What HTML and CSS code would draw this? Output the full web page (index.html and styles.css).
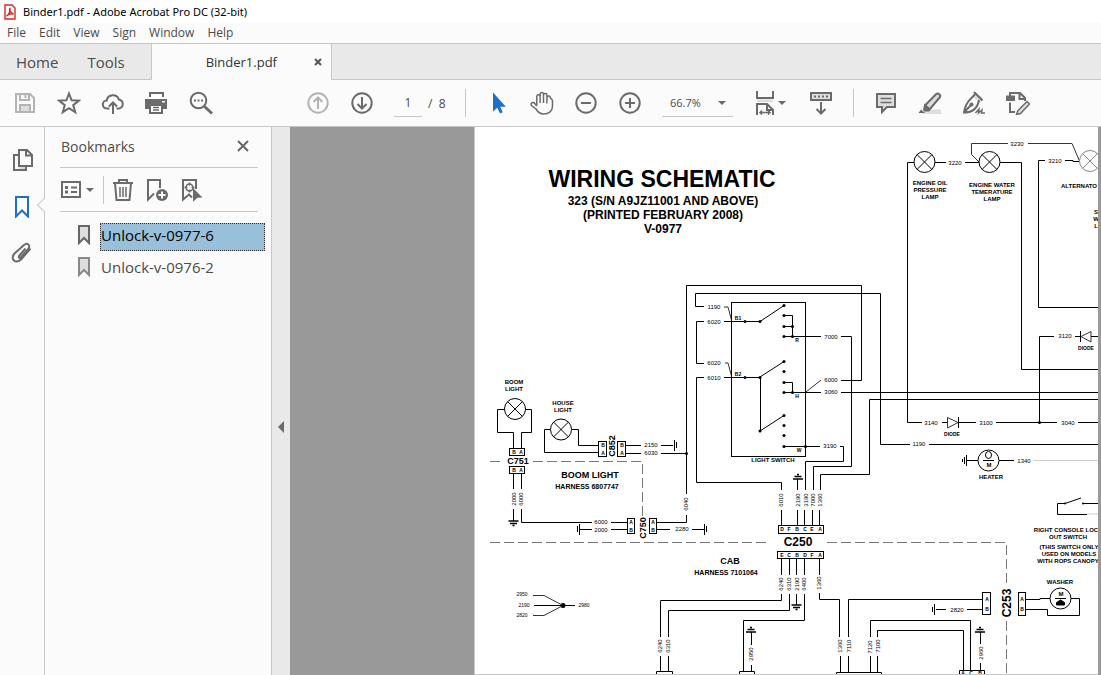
FILE: index.html
```html
<!DOCTYPE html>
<html lang="en">
<head>
  <meta charset="UTF-8">
  <meta name="viewport" content="width=device-width, initial-scale=1.0">
  <title>Binder1.pdf - Adobe Acrobat Pro DC (32-bit)</title>
  <link rel="stylesheet" href="styles.css">
</head>
<body>
<div class="app">

  <!-- Title bar -->
  <header class="titlebar">
    <svg class="app-icon" viewBox="0 0 12 16">
      <path d="M1 1h7l3 3v11H1z" fill="#fff" stroke="#e1251b" stroke-width="1.4"/>
      <path d="M2.500 12c2-1 4-4.500 3.500-7.500c-1.200.5 0 4 3.500 5.500c-2.500-.6-5 .2-7 2z" fill="none" stroke="#e1251b" stroke-width="1.400"/>
    </svg>
    <span>Binder1.pdf - Adobe Acrobat Pro DC (32-bit)</span>
  </header>

  <!-- Menu -->
  <nav class="menubar">
    <button>File</button>
    <button>Edit</button>
    <button>View</button>
    <button>Sign</button>
    <button>Window</button>
    <button>Help</button>
  </nav>

  <!-- Tabs -->
  <div class="tabs">
    <div class="tabs-main">
      <button>Home</button>
      <button>Tools</button>
    </div>
    <div class="tab-doc">
      <button class="tab-name">Binder1.pdf</button>
      <button class="tab-close" aria-label="Close tab">
        <svg viewBox="0 0 8 8"><path d="M1 1l6 6M7 1l-6 6" stroke="#555" stroke-width="2"/></svg>
      </button>
    </div>
    <div class="tabs-rest"></div>
  </div>

  <!-- Toolbar -->
  <div class="toolbar">
    <div class="group group-file">
      <button class="tool light" aria-label="Save">
        <svg class="icon" viewBox="0 0 24 24"><path d="M3 3h14l4 4v14H3zM7 3v6h9V3M7 21v-7h10v7"/><path d="M12.500 4v3" /><path d="M8 15h8v5H8z" class="tint"/></svg>
      </button>
      <button class="tool" aria-label="Star">
        <svg class="icon" viewBox="0 0 24 24"><path d="M12 2.500l2.600 6.800 7.300.3-5.700 4.500 2 7-6.200-4-6.200 4 2-7L2.100 9.600l7.300-.3z"/></svg>
      </button>
      <button class="tool" aria-label="Share">
        <svg class="icon" viewBox="0 0 24 24"><path d="M8.500 17.500H6a4 4 0 0 1-.3-8 6.300 6.300 0 0 1 12.200-1 4.600 4.600 0 0 1 .3 9h-2.700M12 23V12M8 15.500l4-4 4 4"/></svg>
      </button>
      <button class="tool" aria-label="Print">
        <svg class="icon" viewBox="0 0 24 24"><path class="solid" d="M4 1h15v5H4zM0 8h22v10h-4v-3H4v3H0z"/><path class="paper" d="M6 3h11v5H6zM17 10h3v1.500h-3z"/><path d="M5 14h12v8H5z" fill="#fff"/><path class="thin" d="M8 16.500h6M8 19h6"/></svg>
      </button>
      <button class="tool" aria-label="Find">
        <svg class="icon" viewBox="0 0 24 24"><circle cx="9.500" cy="9.500" r="7.800"/><path class="thick" d="M15.500 15.500l7.500 7"/><path class="solid" d="M5 8.500h2v2H5zM8.500 8.500h2v2h-2zM12 8.500h2v2h-2z"/></svg>
      </button>
    </div>

    <div class="group group-page">
      <button class="tool light" aria-label="Previous page">
        <svg class="icon" viewBox="0 0 24 24"><circle cx="12" cy="12" r="9.700"/><path d="M12 18V7M7.500 11l4.500-4.500 4.500 4.500"/></svg>
      </button>
      <button class="tool" aria-label="Next page">
        <svg class="icon" viewBox="0 0 24 24"><circle cx="12" cy="12" r="9.700"/><path d="M12 6v11M7.500 13l4.500 4.500 4.500-4.500"/></svg>
      </button>
      <input class="page-input" type="text" value="1" aria-label="Page number">
      <span class="page-total">/&nbsp; 8</span>
    </div>

    <div class="divider"></div>

    <div class="group">
      <button class="tool" aria-label="Select">
        <svg class="icon" viewBox="0 0 24 24"><path d="M7 1.500v19l4.300-3.800 2.700 5.800 2.700-1.200-2.500-5.600h5.600z" fill="#1f6fc9" stroke="none"/></svg>
      </button>
      <button class="tool" aria-label="Hand">
        <svg class="icon hand" viewBox="0 0 24 24"><path d="M6.800 14.500V5.300c0-2.200 3.300-2.200 3.300 0V12M10.100 12V3.300c0-2.400 3.400-2.400 3.400 0V12M13.500 4.300c0-2.300 3.400-2.300 3.400 0V12.500M16.900 6.800c0-2.300 3.400-2.300 3.400 0 .5 1 1.700 1 2.200 3V15c0 5-3.500 8-9 8-4.500 0-6-2.500-7.500-5L1.500 14.500c-1.500-2.600 1.800-4 3.300-2l2 2.500"/></svg>
      </button>
      <button class="tool" aria-label="Zoom out">
        <svg class="icon" viewBox="0 0 24 24"><circle cx="12" cy="12" r="9.700"/><path d="M7 12h10"/></svg>
      </button>
      <button class="tool" aria-label="Zoom in">
        <svg class="icon" viewBox="0 0 24 24"><circle cx="12" cy="12" r="9.700"/><path d="M7 12h10M12 7v10"/></svg>
      </button>
    </div>

    <div class="zoom">
      <select aria-label="Zoom level">
        <option>66.7%</option>
        <option>100%</option>
        <option>150%</option>
      </select>
      <span class="caret"></span>
    </div>

    <div class="group">
      <button class="tool tool-fit" aria-label="Fit width">
        <svg class="icon" viewBox="0 0 24 24"><path d="M4 0v7h16V0M4 24V13h10l6 6v5M14 13v6h6"/><path class="thin" d="M7 21.500h10M9 19.500l-2 2 2 2M15 19.500l2 2-2 2"/><path class="tint" d="M4 8.500h16V11H4z"/></svg>
        <span class="caret"></span>
      </button>
      <button class="tool" aria-label="Show toolbar">
        <svg class="icon" viewBox="0 0 24 24"><path class="filled" d="M2 2h20v7H2z"/><path class="dots" d="M5 5.500h15"/><path d="M12 11v11M7.500 18l4.500 4.500 4.500-4.500"/></svg>
      </button>
    </div>

    <div class="divider"></div>

    <div class="group">
      <button class="tool" aria-label="Comment">
        <svg class="icon" viewBox="0 0 24 24"><path class="filled" d="M3 3h18v13h-8l-5 5v-5H3z"/><path class="thin" d="M6.500 7.500h11M6.500 11.500h11"/></svg>
      </button>
      <button class="tool" aria-label="Highlight">
        <svg class="icon" viewBox="0 0 24 24"><path class="tint" d="M8 18.500h15V23H4z"/><path class="filled" d="M7 14.500L18 3.200c2-2 5.500 1 3.600 3.300L11.500 18.500H8z"/><path class="solid" d="M6.500 12.500l6.500 5.500-2 2.500H6l-1-2zM3 18.500l4 3.500H.5z"/></svg>
      </button>
      <button class="tool" aria-label="Sign">
        <svg class="icon" viewBox="0 0 24 24"><path class="tint" d="M14 2l7 5-3 5-7-6z"/><path d="M12 1l8.500 8.500M13 3C10.500 7.500 3.500 9 2 21.500 10 21.500 15.500 18 17 9M2 21.500l6.500-7"/><circle class="solid" cx="9.500" cy="13.500" r="2"/><path class="thin" d="M13.500 22l3.500-4-.5 4 3.500-3-.5 3h3.500"/></svg>
      </button>
      <button class="tool" aria-label="Edit">
        <svg class="icon" viewBox="0 0 24 24"><path d="M4 11.500V21h5M4 5V2h10l5 5v3M13.500 2v6H19"/><rect class="solid" x="0" y="4.500" width="9" height="5.500"/><path class="filled thin" d="M12 19.500l9-9 2.500 2.500-9 9.500-4 1z"/></svg>
      </button>
    </div>
  </div>

  <div class="workspace">
    <!-- Side rail -->
    <nav class="rail">
      <button class="rail-item" aria-label="Pages">
        <svg class="icon" viewBox="0 0 24 24"><path class="tint" d="M9 18h7v3H9z"/><path d="M9 2h8l5 5v11H9zM16 2v5.500h6M9 7H4v15h12v-3"/></svg>
      </button>
      <button class="rail-item active" aria-label="Bookmarks">
        <svg class="icon" viewBox="0 0 24 24"><path d="M6 3h12v19.500l-6-6-6 6z"/></svg>
        <span class="notch"></span>
      </button>
      <button class="rail-item" aria-label="Attachments">
        <svg class="icon" viewBox="0 0 24 24"><path d="M15.500 8.500l-6 7c-1.500 1.800-.2 3.200 1.500 1.700l7-8c3-3.500-.5-7.200-4-4.200L4.500 13.500c-5 5.500 1.500 11 6.500 6l9.500-11"/></svg>
      </button>
    </nav>

    <!-- Bookmarks panel -->
    <aside class="panel">
      <div class="panel-head">
        <h2>Bookmarks</h2>
        <button class="panel-close" aria-label="Close panel">
          <svg viewBox="0 0 12 12"><path d="M1 1l10 10M11 1L1 11" stroke="#666" stroke-width="2"/></svg>
        </button>
      </div>
      <div class="panel-tools">
        <button class="options" aria-label="Options">
          <svg class="icon" viewBox="0 0 24 24"><rect x="2" y="4" width="18" height="15"/><path d="M11 9.500h6M11 14h6"/><path class="solid" d="M5 8h3v3H5zM5 12.500h3v3H5z"/></svg>
          <span class="caret"></span>
        </button>
        <div class="divider small"></div>
        <button aria-label="Delete">
          <svg class="icon" viewBox="0 0 24 24"><path d="M2 5h20M8 5V2h8v3M4 5l1.500 17h13L20 5"/><path class="thin" d="M9 9v10M12 9v10M15 9v10"/></svg>
        </button>
        <button aria-label="New bookmark">
          <svg class="icon" viewBox="0 0 24 24"><path d="M15 10V2H3v19.500l6-6"/><circle class="solid" cx="17" cy="17" r="6"/><path d="M13.500 17h7M17 13.500v7" stroke="#fff"/></svg>
        </button>
        <button aria-label="Find bookmark">
          <svg class="icon" viewBox="0 0 24 24"><path d="M17 11V2H4v19.500l6-5 3 3"/><circle class="thin" cx="10.500" cy="9.500" r="3.500"/><path class="thin" d="M10.500 4.500v3M10.500 11.500v3M5.500 9.500h3M12.500 9.500h3"/><path class="solid" d="M14 10l9.500 9.500-5 .3-4.500 4z"/></svg>
        </button>
      </div>
      <ul class="bookmarks">
        <li class="selected">
          <svg viewBox="0 0 14 20"><path d="M2 1h10v17l-5-5-5 5z"/></svg>
          <a href="#page1">Unlock-v-0977-6</a>
        </li>
        <li>
          <svg viewBox="0 0 14 20"><path d="M2 1h10v17l-5-5-5 5z"/></svg>
          <a href="#page2">Unlock-v-0976-2</a>
        </li>
      </ul>
    </aside>

    <button class="splitter" aria-label="Collapse panel"><span></span></button>

    <!-- Document -->
    <main class="viewer">
      <div class="page" id="page1">
        <svg class="schematic" viewBox="475 127 624 547">
          <defs>
            <g id="lamp">
              <circle r="10.500"/>
              <path d="M-7.400-7.400L7.400 7.400M7.400-7.400L-7.400 7.400"/>
            </g>
            <g id="ground">
              <path d="M-5 0H5M-3.500 2.500H3.500M-1 4.500H1" stroke-width="1.500"/>
            </g>
          </defs>

          <!-- Heading -->
          <text class="title" x="662" y="187">WIRING SCHEMATIC</text>
          <g class="subtitle">
            <text x="663" y="205">323 (S/N A9JZ11001 AND ABOVE)</text>
            <text x="663" y="219">(PRINTED FEBRUARY 2008)</text>
            <text x="663" y="233">V-0977</text>
          </g>

          <!-- Harness borders -->
          <g class="dashed">
            <path d="M490 461.500H503M533 461.500H642.500V516"/>
            <path d="M490 542.500H768M827 542.500H1006.500V583M1006.500 621V674"/>
          </g>

          <!-- Wires: lamps and alternator -->
          <g class="wire">
            <path d="M914 162.500H907.500V422.500H922M942 422.500H947M958 422.500H976M996 422.500H1057M1078 422.500H1099"/>
            <path d="M935 162.500H946M965 162.500H979M1000 162.500H1021.500V369.500H1099"/>
            <path d="M979 162L971.500 154.500V143.500H1008M1028 143.500H1072L1079.500 161" class="fine"/>
            <path d="M1079 161.500H1073V160.500H1065M1045 160.500H1038.500V307.500H1099"/>
            <path d="M1039.500 422V336.500H1054M1075 336.500H1081M1091 336.500H1099M1080.500 331V342M958.500 417V428"/>
            <path d="M947.500 417.500L958 422.500L947.500 428ZM1091 331.500L1081 336.500L1091 342Z" class="fine"/>
            <path d="M999 460.500H1014M967 460.500H978M966.500 455V466M964.500 457V464M962.500 459V462"/>
            <path d="M1034 460.500H1099" stroke="#ccc"/>
          </g>

          <!-- Wires: light switch -->
          <g class="wire">
            <path d="M686.500 494V285.500H861.500V380.500H841M686.500 515V522.500H657"/>
            <path d="M704 306.500H695.500V293.500H880.500V444.500H910M929 444.500H1099"/>
            <path d="M704 321.500H696.500V363.500H704M704 377.500H696.500V482.500H781.500V490"/>
            <path d="M724 307H728L731.500 320M725 363H728L731.500 376M806 392L821 380" class="fine"/>
            <rect x="731.500" y="302.500" width="74" height="154"/>
            <path d="M724 321.500H760M724 377.500H760.500V431M784 315.500H792.500V336.500M784 326.500H792.500M784 336.500H821M784 382.500H792.500V392.500M784 392.500H821M784 446.500H820"/>
            <path d="M760 321.500L784 305.500M760 377L784 361.500M760 431L784 415.500"/>
            <path d="M841 336.500H851.500V466.500H813.500V490M841 392.500H1099M1099 399.500H869.500V474.500H820.500V490"/>
            <path d="M840 446.500H843.500V461.500H805.500V490M797.500 479V490"/>
          </g>
          <g class="dot">
            <circle cx="745" cy="321.500" r="1.500"/><circle cx="760" cy="321.500" r="1.500"/>
            <circle cx="784" cy="305.500" r="1.500"/><circle cx="784" cy="315.500" r="1.500"/>
            <circle cx="784" cy="326.500" r="1.500"/><circle cx="784" cy="336.500" r="1.500"/>
            <circle cx="792.500" cy="326.500" r="1.500"/><circle cx="792.500" cy="336.500" r="1.500"/>
            <circle cx="745" cy="377.500" r="1.500"/><circle cx="760" cy="377.500" r="1.500"/>
            <circle cx="784" cy="361.500" r="1.500"/><circle cx="784" cy="371.500" r="1.500"/>
            <circle cx="784" cy="382.500" r="1.500"/><circle cx="784" cy="392.500" r="1.500"/>
            <circle cx="792.500" cy="392.500" r="1.500"/><circle cx="760" cy="431" r="1.500"/>
            <circle cx="784" cy="415.500" r="1.500"/><circle cx="784" cy="425.500" r="1.500"/>
            <circle cx="784" cy="435.500" r="1.500"/><circle cx="784" cy="446.500" r="1.500"/>
            <circle cx="805.500" cy="446.500" r="1.500"/><circle cx="686.500" cy="453.500" r="1.500"/>
            <circle cx="1039.500" cy="422.500" r="1.500"/><circle cx="563" cy="605.500" r="2.500"/>
            <circle cx="1065" cy="503.500" r="1"/><circle cx="1083" cy="503.500" r="1"/>
          </g>

          <!-- Wires: boom and house lights -->
          <g class="wire">
            <path d="M504 409.500H497.500V432.500H513.500V448M526 409.500H531.500V432.500H521.500V448"/>
            <path d="M513.500 474V489M521.500 474V489M513.500 509V521M521.500 509V522.500H592M611 522.500H627"/>
            <path d="M550 429.500H544.500V452.500H598M572 429.500H578.500V445.500H598"/>
            <path d="M626 445.500H641M661 445.500H673M626 453.500H641M661 453.500H686"/>
            <path d="M579 529.500H592M611 529.500H627M657 529.500H670M692 529.500H704"/>
            <path d="M674.500 440V451M676.500 442V448M704.500 524V535M706.500 526V532M579.500 524V535M577.500 526V532"/>
            <path d="M533 595.500H544L563 605.500M533 615.500H544L563 605.500" class="fine"/>
            <path d="M534 605.500H575"/>
            <rect x="509.500" y="448.500" width="15" height="7"/>
            <rect x="509.500" y="466.500" width="15" height="7"/>
            <rect x="598.500" y="441.500" width="8" height="15"/>
            <rect x="617.500" y="441.500" width="8" height="15"/>
            <rect x="627.500" y="518.500" width="7" height="15"/>
            <rect x="649.500" y="518.500" width="7" height="15"/>
          </g>

          <!-- Wires: cab -->
          <g class="wire">
            <rect x="778.500" y="525.500" width="45" height="8"/>
            <rect x="777.500" y="551.500" width="46" height="7"/>
            <path d="M781.500 510V525M797.500 510V525M804.500 510V525M812.500 510V525M819.500 510V525"/>
            <path d="M781.500 559V575M789.500 559V575M796.500 559V575M804.500 559V575M819.500 559V575"/>
            <path d="M781.500 594V600.500H660.500V637M789.500 594V610.500H668.500V637M796.500 594V605M804.500 594V620.500H743.500V671"/>
            <path d="M819.500 593V599.500H839.500V637M982 599.500H848.500V637M970.500 671V620.500H870.500V637M963.500 671V630.500H877.500V637"/>
            <path d="M660.500 656V671M668.500 656V671M751.500 632V645M751.500 665V671M840.500 656V672M848.500 656V672M870.500 656V672M877.500 656V672M980.500 632V644M980.500 663V671"/>
            <path d="M656.500 675V671.500H672.500V675M739.500 675V671.500H754.500V675M836.500 675V672.500H881.500V675M959.500 675V670.500H984.500V675"/>
            <rect x="982.500" y="592.500" width="8" height="22"/>
            <rect x="1018.500" y="592.500" width="7" height="23"/>
            <path d="M967 609.500H982M936 609.500H946M934.500 604V615M932.500 607V612"/>
            <path d="M1026 599.500H1040V598.500H1050M1026 609.500H1047.500V615.500H1079.500V598.500H1071"/>
            <path d="M1065 503.500H1057.500V514.500H1087M1083 503.500H1099M1065 503.500L1081 498"/>
            <path d="M1087 514H1099" stroke="#ccc"/>
          </g>

          <!-- Lamps, motors and grounds -->
          <g class="part">
            <use href="#lamp" x="924.500" y="162"/>
            <use href="#lamp" x="989.500" y="162"/>
            <use href="#lamp" x="1090" y="161" stroke="#888"/>
            <use href="#lamp" x="515" y="409"/>
            <use href="#lamp" x="561" y="429.500"/>
            <circle cx="988.500" cy="460.500" r="10.500"/>
            <ellipse cx="988.500" cy="455" rx="3" ry="3.500"/>
            <path d="M983 460.500H994M1055 598.500H1066"/>
            <circle cx="1060.500" cy="598.500" r="10.500"/>
            <path d="M1056.500 605v-2.500l4-2.500 4 2.500v2.500z" fill="#000"/>
            <use href="#ground" x="513.500" y="521"/>
            <use href="#ground" x="796.500" y="605"/>
            <use href="#ground" transform="translate(798 479) scale(1 -1)"/>
            <use href="#ground" transform="translate(751 632) scale(1 -1)"/>
            <use href="#ground" transform="translate(980 632) scale(1 -1)"/>
          </g>

          <!-- Wire numbers -->
          <g class="num">
            <text x="955" y="165">3220</text><text x="1017" y="146">3230</text><text x="1055" y="163">3210</text>
            <text x="1065" y="338">3120</text><text x="931" y="425">3140</text><text x="986" y="425">3100</text>
            <text x="1068" y="425">3040</text><text x="919" y="446">1190</text><text x="1024" y="463">1340</text>
            <text x="714" y="309">1190</text><text x="714" y="324">6020</text><text x="714" y="365">6020</text>
            <text x="714" y="380">6010</text><text x="831" y="339">7000</text><text x="831" y="382">6000</text>
            <text x="831" y="394">3060</text><text x="830" y="448">3190</text><text x="651" y="447">2150</text>
            <text x="651" y="455">6030</text><text x="601" y="524">6000</text><text x="601" y="532">2000</text>
            <text x="682" y="531">2280</text><text x="957" y="612">2820</text>
          </g>
          <g class="num num-small">
            <text x="522" y="596">2950</text><text x="524" y="607">2190</text>
            <text x="522" y="617">2820</text><text x="584" y="607">2980</text>
          </g>
          <g class="num">
            <text transform="translate(516 499) rotate(-90)">2000</text>
            <text transform="translate(523 499) rotate(-90)">6000</text>
            <text transform="translate(688 504) rotate(-90)">6040</text>
            <text transform="translate(783 500) rotate(-90)">6010</text>
            <text transform="translate(800 500) rotate(-90)">2190</text>
            <text transform="translate(808 500) rotate(-90)">3190</text>
            <text transform="translate(815 500) rotate(-90)">7000</text>
            <text transform="translate(822 500) rotate(-90)">1360</text>
            <text transform="translate(783 584) rotate(-90)">6240</text>
            <text transform="translate(791 584) rotate(-90)">6310</text>
            <text transform="translate(799 584) rotate(-90)">2190</text>
            <text transform="translate(806 584) rotate(-90)">6400</text>
            <text transform="translate(821 583) rotate(-90)">1360</text>
            <text transform="translate(662 646) rotate(-90)">6240</text>
            <text transform="translate(670 646) rotate(-90)">6310</text>
            <text transform="translate(753 654) rotate(-90)">2950</text>
            <text transform="translate(842 646) rotate(-90)">1360</text>
            <text transform="translate(851 646) rotate(-90)">7110</text>
            <text transform="translate(872 647) rotate(-90)">7120</text>
            <text transform="translate(880 646) rotate(-90)">7100</text>
            <text transform="translate(983 653) rotate(-90)">2960</text>
          </g>

          <!-- Component names -->
          <g class="label">
            <text x="930" y="185">ENGINE OIL</text><text x="930" y="192">PRESSURE</text><text x="930" y="199">LAMP</text>
            <text x="992" y="187">ENGINE WATER</text><text x="992" y="194">TEMERATURE</text><text x="992" y="201">LAMP</text>
            <text x="1079" y="188">ALTERNATO</text>
            <text x="1096" y="214">S</text><text x="1096" y="221">W</text><text x="1096" y="228">L</text>
            <text x="514" y="384">BOOM</text><text x="514" y="391">LIGHT</text>
            <text x="563" y="405">HOUSE</text><text x="563" y="412">LIGHT</text>
            <text x="773" y="462">LIGHT SWITCH</text><text x="991" y="479">HEATER</text>
            <text x="1066" y="532">RIGHT CONSOLE LOC</text><text x="1068" y="539">OUT SWITCH</text>
            <text x="1069" y="549">(THIS SWITCH ONLY</text><text x="1069" y="556">USED ON MODELS</text><text x="1068" y="563">WITH ROPS CANOPY</text>
            <text x="1060" y="584">WASHER</text>
            <text x="989" y="467">M</text><text x="1061" y="596">M</text>
          </g>
          <g class="label pin">
            <text x="952" y="436">DIODE</text><text x="1086" y="350">DIODE</text>
            <text x="738" y="320">B1</text><text x="738" y="376">B2</text>
            <text x="797" y="342">R</text><text x="797" y="398">H</text><text x="799" y="452">W</text>
            <text x="514" y="454">B</text><text x="521" y="454">A</text><text x="514" y="472">B</text><text x="521" y="472">A</text>
            <text x="603" y="447">B</text><text x="603" y="455">A</text><text x="622" y="447">B</text><text x="622" y="455">A</text>
            <text x="631" y="524">A</text><text x="631" y="532">B</text><text x="653" y="524">A</text><text x="653" y="532">B</text>
            <text x="782" y="531">D</text><text x="789" y="531">F</text><text x="797" y="531">B</text><text x="805" y="531">C</text><text x="812" y="531">E</text><text x="820" y="531">A</text>
            <text x="782" y="557">E</text><text x="789" y="557">C</text><text x="797" y="557">B</text><text x="805" y="557">D</text><text x="812" y="557">F</text><text x="820" y="557">A</text>
            <text x="987" y="601">A</text><text x="987" y="611">B</text><text x="1022" y="601">A</text><text x="1022" y="611">B</text>
            <text x="963" y="675">A</text><text x="971" y="675">C</text><text x="980" y="675">B</text>
          </g>
          <g class="harness">
            <text x="590" y="478">BOOM LIGHT</text><text x="730" y="564">CAB</text><text x="518" y="464">C751</text>
            <text transform="translate(615 446) rotate(-90)">C852</text>
            <text transform="translate(646 528) rotate(-90)">C750</text>
          </g>
          <g class="harness-no">
            <text x="587" y="489">HARNESS 6807747</text><text x="726" y="575">HARNESS 7101064</text>
          </g>
          <g class="subtitle">
            <text x="798" y="546">C250</text>
            <text transform="translate(1011 603) rotate(-90)">C253</text>
          </g>
        </svg>
      </div>
    </main>
  </div>
</div>
</body>
</html>
```

FILE: styles.css
```css
/* General */
* {
  box-sizing: border-box;
}

body {
  margin: 0;
  font-family: "Open Sans", "Segoe UI", sans-serif;
  font-size: 12px;
  color: #4b4b4b;
  background: #fbfbfb;
}

button {
  padding: 0;
  border: none;
  background: none;
  font: inherit;
  color: inherit;
}

.app {
  display: flex;
  flex-direction: column;
  height: 100vh;
  overflow: hidden;
}

/* Title bar */
.titlebar {
  display: flex;
  align-items: center;
  flex: none;
  gap: 7px;
  height: 23px;
  padding-left: 4px;
  background: #fff;
  color: #000;
  font-size: 12px;
  font-family: "Noto Sans", "Segoe UI", sans-serif;
  font-size: 11px;
}

.app-icon {
  width: 12px;
  height: 16px;
}

/* Menu */
.menubar {
  display: flex;
  align-items: center;
  flex: none;
  gap: 13px;
  height: 21px;
  padding: 0 0 2px 7px;
  border-bottom: 1px solid #c8c8c8;
}

/* Tabs */
.tabs {
  display: flex;
  flex: none;
  height: 36px;
  font-size: 15px;
}

.tabs-main {
  display: flex;
  gap: 29px;
  width: 152px;
  padding-left: 16px;
  background: #e9e9e9;
  border-right: 1px solid #c8c8c8;
  border-bottom: 1px solid #c8c8c8;
}

.tab-doc {
  display: flex;
  align-items: center;
  justify-content: flex-end;
  gap: 37px;
  width: 180px;
  padding-right: 9px;
  border-right: 1px solid #c8c8c8;
  color: #333;
  font-size: 13px;
}

.tab-close svg {
  display: block;
  width: 8px;
  height: 8px;
}

.tabs-rest {
  flex: 1;
  background: #e9e9e9;
  border-bottom: 1px solid #c8c8c8;
}

/* Toolbar */
.toolbar {
  display: flex;
  align-items: center;
  flex: none;
  height: 47px;
  padding-left: 3px;
  border-bottom: 1px solid #c8c8c8;
}

.group {
  display: flex;
  align-items: center;
}

.group-file {
  margin-right: 73px;
}

.tool {
  display: flex;
  align-items: center;
  justify-content: center;
  flex: none;
  width: 44px;
  height: 44px;
}

.tool-fit {
  position: relative;
  margin-right: 12px;
}

.tool-fit .caret {
  position: absolute;
  right: 1px;
}

.icon {
  display: block;
  width: 24px;
  height: 24px;
  fill: none;
  stroke: #6b6b6b;
  stroke-width: 2;
}

.light .icon {
  stroke: #b4b4b4;
}

.icon .solid {
  fill: #6b6b6b;
  stroke: none;
}

.icon .paper {
  fill: #fff;
  stroke: none;
}

.icon .tint {
  fill: #dedede;
  stroke: none;
}

.icon .filled {
  fill: #dedede;
}

.icon .thin,
.icon.hand {
  stroke-width: 1.5;
}

.icon .thick {
  stroke-width: 3;
}

.icon .dots {
  stroke-dasharray: 2 2;
}

.page-input {
  width: 28px;
  height: 28px;
  margin-left: 10px;
  padding: 0;
  border: none;
  border-bottom: 1px solid #c8c8c8;
  background: none;
  color: #4b4b4b;
  font: inherit;
  text-align: center;
}

.page-total {
  width: 24px;
  margin-left: 6px;
}

.divider {
  width: 1px;
  height: 28px;
  margin: 0 10px;
  background: #c8c8c8;
}

.group-page {
  margin-right: 3px;
}

.zoom {
  display: flex;
  align-items: center;
  height: 28px;
  margin: 0 10px;
  padding: 0 7px 0 8px;
  border-bottom: 1px solid #c8c8c8;
}

.zoom select {
  width: 48px;
  padding: 0;
  border: none;
  appearance: none;
  background: none;
  color: #4b4b4b;
  font: inherit;
  font-size: 11px;
}

.caret {
  border: 4px solid transparent;
  border-top-color: #6b6b6b;
  border-bottom: none;
}

/* Side rail */
.workspace {
  display: flex;
  flex: 1;
  min-height: 0;
}

.rail {
  display: flex;
  flex-direction: column;
  gap: 22px;
  width: 45px;
  padding: 21px 0 0 10px;
  border-right: 1px solid #c8c8c8;
}

.rail-item {
  position: relative;
  width: 24px;
}

.rail-item.active .icon {
  stroke: #1f6fc9;
}

.notch {
  position: absolute;
  top: 6px;
  right: -15px;
  width: 10px;
  height: 10px;
  border: 1px solid #c8c8c8;
  border-top: none;
  border-right: none;
  background: #fbfbfb;
  transform: rotate(45deg);
}

/* Bookmarks panel */
.panel {
  width: 227px;
  padding: 0 13px 0 15px;
  border-right: 1px solid #c8c8c8;
}

.panel-head {
  display: flex;
  align-items: center;
  justify-content: space-between;
  height: 41px;
  padding: 0 9px 2px 1px;
  border-bottom: 1px solid #c8c8c8;
}

.panel-head h2 {
  margin: 0;
  font-size: 14px;
  font-weight: normal;
}

.panel-close svg {
  display: block;
  width: 12px;
  height: 12px;
}

.panel-tools {
  display: flex;
  align-items: center;
  gap: 10px;
  height: 44px;
  border-bottom: 1px solid #c8c8c8;
}

.panel-tools .options {
  display: flex;
  align-items: center;
  gap: 2px;
}

.divider.small {
  margin: 0 -3px 0 -1px;
}

.bookmarks {
  margin: 11px -7px 0 0;
  padding: 0 0 0 16px;
  list-style: none;
  font-size: 15px;
}

.bookmarks li {
  display: flex;
  align-items: center;
  gap: 8px;
  margin-bottom: 4px;
}

.bookmarks svg {
  width: 16px;
  height: 20px;
  margin-bottom: 4px;
  fill: #dedede;
  stroke: #888;
  stroke-width: 2;
}

.bookmarks .selected svg {
  stroke: #666;
}

.bookmarks a {
  flex: 1;
  height: 28px;
  border: 1px solid transparent;
  color: #4b4b4b;
  line-height: 22px;
  text-decoration: none;
}

.bookmarks .selected a {
  border: 1px dotted #333;
  background: #99c0da;
  color: #000;
}

.splitter {
  display: flex;
  align-items: center;
  justify-content: center;
  width: 18px;
  padding-top: 52px;
  background: #e9e9e9;
}

.splitter span {
  height: 12px;
  border: 6px solid transparent;
  border-right-color: #6b6b6b;
  border-left: none;
}

/* Document */
.viewer {
  flex: 1;
  min-width: 0;
  padding: 0 3px 0 184px;
  background: #999;
}

.page {
  height: 100%;
  border-left: 1px solid #c8c8c8;
  border-bottom: 1px solid #c8c8c8;
  background: #fff;
  overflow: hidden;
}

.schematic {
  display: block;
  width: 624px;
  height: 547px;
  font-family: "Liberation Sans", Arial, sans-serif;
  font-weight: bold;
  text-anchor: middle;
}

.title {
  font-size: 23px;
}

.subtitle {
  font-size: 12px;
}

.harness {
  font-size: 9px;
}

.harness-no {
  font-size: 7px;
}

.label {
  font-size: 6px;
}

.pin {
  font-size: 5px;
}

.num {
  font-size: 6px;
  font-weight: normal;
}

.num-small {
  font-size: 5px;
}

.wire,
.part {
  fill: none;
  stroke: #000;
}

.fine {
  stroke: #333;
}

.dashed {
  fill: none;
  stroke: #777;
  stroke-dasharray: 10 4;
}
```
